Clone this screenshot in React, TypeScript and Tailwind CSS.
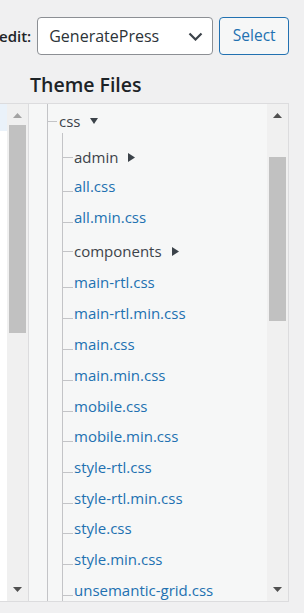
import React from "react";

type Row = { label: string; folder?: boolean; mt: string; open?: boolean };

const rows: Row[] = [
  { label: "admin", folder: true, mt: "mt-[14px]" },
  { label: "all.css", mt: "mt-[9px]" },
  { label: "all.min.css", mt: "mt-[11px]" },
  { label: "components", folder: true, mt: "mt-[14px]" },
  { label: "main-rtl.css", mt: "mt-[11px]" },
  { label: "main-rtl.min.css", mt: "mt-[11px]" },
  { label: "main.css", mt: "mt-[11px]" },
  { label: "main.min.css", mt: "mt-[11px]" },
  { label: "mobile.css", mt: "mt-[11px]" },
  { label: "mobile.min.css", mt: "mt-[10px]" },
  { label: "style-rtl.css", mt: "mt-[11px]" },
  { label: "style-rtl.min.css", mt: "mt-[11px]" },
  { label: "style.css", mt: "mt-[10px]" },
  { label: "style.min.css", mt: "mt-[11px]" },
  { label: "unsemantic-grid.css", mt: "mt-[11px]" },
];

function TriDown({ cls }: { cls: string }) {
  return (
    <svg width="9" height="5" viewBox="0 0 9 5" className={cls}>
      <polygon points="0,0 9,0 4.5,5" fill="currentColor" />
    </svg>
  );
}
function TriUp({ cls }: { cls: string }) {
  return (
    <svg width="9" height="5" viewBox="0 0 9 5" className={cls}>
      <polygon points="0,5 9,5 4.5,0" fill="currentColor" />
    </svg>
  );
}

export default function App() {
  return (
    <div
      className="w-[304px] h-[613px] bg-[#f0f0f1] overflow-hidden text-[#1d2327]"
      style={{ fontFamily: '"Open Sans", "Noto Sans", sans-serif' }}
    >
      {/* top row */}
      <div className="flex items-center pt-[17px] h-[55px]">
        <span className="ml-[-1px] text-[15px] font-semibold leading-none text-[#1d2327]">edit:</span>
        <div className="ml-[6px] w-[176px] h-[38px] bg-white border border-[#8c8f94] rounded-[4px] flex items-center justify-between pl-[11px] pr-[9px]">
          <span className="text-[16px] text-[#2c3338]">GeneratePress</span>
          <svg width="15" height="9" viewBox="0 0 15 9" className="text-[#3c434a]">
            <polyline points="1.5,1.5 7.5,7.5 13.5,1.5" fill="none" stroke="currentColor" strokeWidth="2.2" />
          </svg>
        </div>
        <button className="ml-[6px] w-[70px] h-[38px] bg-[#f6f7f7] border border-[#2271b1] rounded-[4px] text-[15.5px] text-[#2271b1] flex items-center justify-center">
          Select
        </button>
      </div>

      {/* heading */}
      <div className="pl-[30px] mt-[14px] h-[34px] text-[19.5px] font-semibold leading-[32px] text-[#1d2327]">
        Theme Files
      </div>

      {/* panel */}
      <div className="flex w-[289px] h-[499px] border-t border-b border-r border-[#dcdcde]">
        {/* left content strip */}
        <div className="w-[7px] flex flex-col bg-white">
          <div className="h-[27px] bg-[#eaf2fa]" />
        </div>
        {/* left scrollbar */}
        <div className="w-[21px] bg-[#f0f0f0] flex flex-col items-center">
          <div className="h-[21px] flex items-center justify-center pt-[2px]">
            <TriUp cls="text-[#a3a3a3]" />
          </div>
          <div className="w-[17px] h-[208px] bg-[#c1c1c1]" />
          <div className="flex-1" />
          <div className="h-[21px] flex items-center justify-center pb-[3px]">
            <TriDown cls="text-[#505050]" />
          </div>
        </div>
        {/* tree area */}
        <div className="flex-1 bg-[#f6f7f7] border-l border-[#dcdcde] pl-[18px] flex">
          <div className="flex-1 border-l border-[#c3c4c7] flex flex-col text-[15px] leading-[20px]">
            {/* css row */}
            <div className="mt-[7px] h-[20px] flex items-center">
              <span className="w-[9px] h-px bg-[#c3c4c7]" />
              <span className="ml-[2px] text-[#3c434a]">css</span>
              <svg width="8" height="6" viewBox="0 0 8 6" className="ml-[10px] text-[#3c434a]">
                <polygon points="0,0 8,0 4,6" fill="currentColor" />
              </svg>
            </div>
            <div className="mt-[2px] ml-[14px] flex-1 border-l border-[#c3c4c7] flex flex-col">
              {rows.map((r) => (
                <div key={r.label} className={`${r.mt} h-[20px] flex ${r.folder ? "items-center" : "items-start"}`}>
                  <span
                    className={`w-[10px] h-px bg-[#c3c4c7] ${r.folder ? "" : "mt-[15px]"}`}
                  />
                  <span className={`ml-[1px] whitespace-nowrap ${r.folder ? "text-[#3c434a]" : "text-[#2271b1]"}`}>
                    {r.label}
                  </span>
                  {r.folder && (
                    <svg width="7" height="9" viewBox="0 0 7 9" className="ml-[10px] text-[#3c434a]">
                      <polygon points="0,0 7,4.5 0,9" fill="currentColor" />
                    </svg>
                  )}
                </div>
              ))}
            </div>
          </div>
        </div>
        {/* right scrollbar */}
        <div className="w-[21px] bg-[#f0f0f0] flex flex-col items-center">
          <div className="h-[21px] flex items-center justify-center pt-[2px]">
            <TriUp cls="text-[#505050]" />
          </div>
          <div className="h-[32px]" />
          <div className="w-[17px] h-[164px] bg-[#c1c1c1]" />
          <div className="flex-1" />
          <div className="h-[21px] flex items-center justify-center pb-[3px]">
            <TriDown cls="text-[#505050]" />
          </div>
        </div>
      </div>
    </div>
  );
}
